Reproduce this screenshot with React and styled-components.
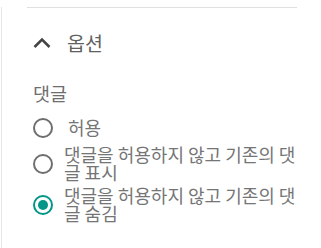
import React, { useState } from "react";
import styled, { createGlobalStyle } from "styled-components";

const GlobalStyle = createGlobalStyle`
  html, body {
    margin: 0;
    padding: 0;
    background: #ffffff;
  }
  body {
    font-family: Roboto, "Noto Sans CJK KR", sans-serif;
  }
`;

const options = [
  { id: "allow", label: "허용", indent: true },
  { id: "show", label: "댓글을 허용하지 않고 기존의 댓글 표시" },
  { id: "hide", label: "댓글을 허용하지 않고 기존의 댓글 숨김" },
];

export default function App() {
  const [value, setValue] = useState("hide");

  return (
    <>
      <GlobalStyle />
      <Panel>
        <Divider />
        <Section>
          <Header>
            <svg width="18" height="12" viewBox="0 0 18 12">
              <polyline
                points="1.5,10 9,2.6 16.5,10"
                fill="none"
                stroke="#444"
                strokeWidth="2.5"
              />
            </svg>
            <HeaderTitle>옵션</HeaderTitle>
          </Header>
          <GroupLabel>댓글</GroupLabel>
          <OptionList>
            {options.map((opt) => (
              <Option key={opt.id} onClick={() => setValue(opt.id)}>
                <Radio $checked={value === opt.id} />
                <OptionText $indent={opt.indent}>{opt.label}</OptionText>
              </Option>
            ))}
          </OptionList>
        </Section>
      </Panel>
    </>
  );
}

const Panel = styled.div`
  height: 248px;
  margin-left: 1px;
  border-left: 1px solid #e6e6e6;
  padding: 0 24px 0 25px;
  box-sizing: border-box;
`;

const Divider = styled.div`
  height: 0;
  border-top: 1px solid #e0e0e0;
  margin-top: 7px;
`;

const Section = styled.div`
  padding-left: 6px;
`;

const Header = styled.div`
  display: flex;
  align-items: center;
  gap: 16px;
  height: 24px;
  margin-top: 23px;

  svg {
    flex-shrink: 0;
  }
`;

const HeaderTitle = styled.span`
  font-family: "Noto Sans CJK KR", sans-serif;
  font-size: 19.5px;
  line-height: 24px;
  color: #616161;
`;

const GroupLabel = styled.div`
  margin-top: 26px;
  font-family: "Noto Sans CJK KR", sans-serif;
  font-size: 18.5px;
  line-height: 24px;
  color: #6e6e6e;
`;

const OptionList = styled.div`
  display: flex;
  flex-direction: column;
  gap: 6px;
  margin-top: 11px;
`;

const Option = styled.label`
  display: flex;
  align-items: center;
  gap: 11px;
  min-height: 24px;
  cursor: pointer;
`;

const Radio = styled.span`
  flex-shrink: 0;
  width: 20px;
  height: 20px;
  box-sizing: border-box;
  border-radius: 50%;
  border: 2px solid ${(p) => (p.$checked ? "#009688" : "#6e6e6e")};
  display: flex;
  align-items: center;
  justify-content: center;

  &::after {
    content: "";
    width: 10px;
    height: 10px;
    border-radius: 50%;
    background: ${(p) => (p.$checked ? "#009688" : "transparent")};
  }
`;

const OptionText = styled.span`
  font-family: "Noto Sans CJK KR", sans-serif;
  font-size: 18px;
  line-height: 17.5px;
  color: #757575;
  padding-left: ${(p) => (p.$indent ? "4px" : "0")};
`;
